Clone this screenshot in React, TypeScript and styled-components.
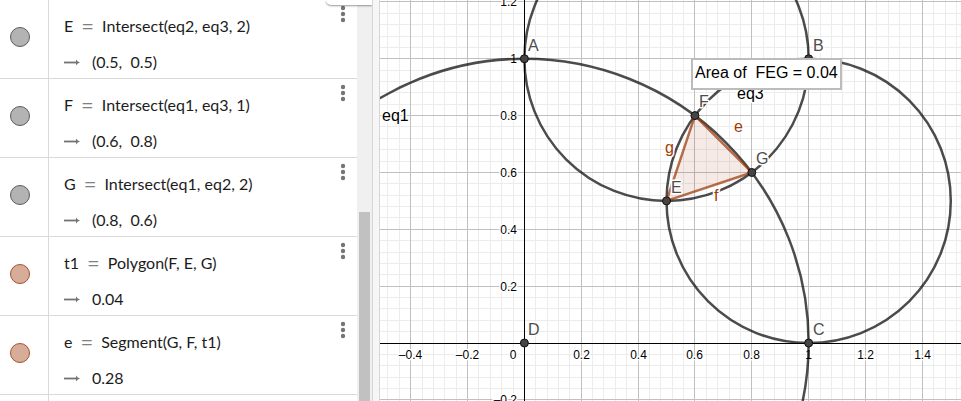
import React from "react";
import styled, { createGlobalStyle } from "styled-components";

const GlobalStyle = createGlobalStyle`
  * { box-sizing: border-box; }
  body { margin: 0; background: #fff; overflow: hidden; }
`;

const Shell = styled.main`
  display: flex;
  height: 100vh;
  min-height: 300px;
  overflow: hidden;
  background: #fff;
`;

const AlgebraView = styled.section`
  position: relative;
  flex: 0 0 372px;
  display: flex;
  overflow: hidden;
`;

const RowList = styled.ul`
  flex: 1;
  display: flex;
  flex-direction: column;
  margin: 0;
  padding: 0;
  list-style: none;
  overflow: hidden;
`;

const Row = styled.li`
  flex: 0 0 79px;
  min-height: 0;
  display: flex;
  border-bottom: 1px solid #dadada;
`;

const EmptyRow = styled.li`
  flex: 1;
  min-height: 0;
  display: flex;
`;

const MarbleCell = styled.div`
  flex: 0 0 49px;
  padding: 27px 0 0 10px;
  border-right: 1px solid #dadada;
`;

const Marble = styled.button<{ $tone: "gray" | "brown" }>`
  display: block;
  width: 20px;
  height: 20px;
  padding: 0;
  border-radius: 50%;
  border: 1px solid ${(p) => (p.$tone === "gray" ? "#5c5c5c" : "#a9502a")};
  background: ${(p) => (p.$tone === "gray" ? "#b3b3b3" : "#d6ad99")};
`;

const Content = styled.div`
  flex: 1;
  padding: 8px 0 0 15px;
  font-family: Lato, sans-serif;
  font-size: 16px;
  line-height: 36px;
  color: #1c1c1c;
  white-space: pre;
`;

const Definition = styled.div`
  display: flex;
  gap: 8px;
`;

const Equals = styled.span`
  font-size: 22px;
  color: #808080;
`;

const Output = styled.div`
  display: flex;
  align-items: center;
  gap: 12px;
`;

const MenuButton = styled.button`
  align-self: flex-start;
  flex: 0 0 29px;
  height: 28px;
  padding: 0;
  border: 0;
  background: none;
`;

const ScrollTrack = styled.div`
  flex: 0 0 15px;
  display: flex;
  flex-direction: column;
  justify-content: flex-end;
  padding: 0 2px;
  background: #f0f0f0;
`;

const ScrollThumb = styled.div`
  height: 189px;
  background: #c1c1c1;
`;

const CornerPanel = styled.div`
  position: absolute;
  top: 0;
  right: 0;
  width: 46px;
  height: 5px;
  border-bottom-left-radius: 6px;
  background: #fff;
  box-shadow: 0 1px 2px rgba(0, 0, 0, 0.4);
`;

const Splitter = styled.div`
  flex: 0 0 8px;
  border: solid #d6d6d6;
  border-width: 0 1px;
  background: #f6f6f6;
`;

const GraphicsView = styled.section`
  position: relative;
  flex: 1;
  min-width: 0;
  overflow: hidden;
`;

const Canvas = styled.svg`
  display: block;
  width: 100%;
  height: 100%;
  font-family: "Liberation Sans", Arial, sans-serif;
`;

const Tick = styled.text`
  font-size: 12px;
  fill: #000;
  stroke: #fff;
  stroke-width: 3px;
  stroke-linejoin: round;
  paint-order: stroke;
`;

const Label = styled.text<{ $color: string }>`
  font-size: 16px;
  fill: ${(p) => p.$color};
  stroke: #fff;
  stroke-width: 3px;
  stroke-linejoin: round;
  paint-order: stroke;
`;

const AreaText = styled.div`
  position: absolute;
  left: 311px;
  top: 58px;
  padding: 3px 2px 5px;
  border: 2px solid #bcbcbc;
  background: #fff;
  font-family: "Liberation Sans", Arial, sans-serif;
  font-size: 16px;
  line-height: 20px;
  color: #000;
  white-space: pre;
`;

type Item = { name: string; command: string; value: string; tone: "gray" | "brown" };

const items: Item[] = [
  { name: "E", command: "Intersect(eq2, eq3, 2)", value: "(0.5,  0.5)", tone: "gray" },
  { name: "F", command: "Intersect(eq1, eq3, 1)", value: "(0.6,  0.8)", tone: "gray" },
  { name: "G", command: "Intersect(eq1, eq2, 2)", value: "(0.8,  0.6)", tone: "gray" },
  { name: "t1", command: "Polygon(F, E, G)", value: "0.04", tone: "brown" },
  { name: "e", command: "Segment(G, F, t1)", value: "0.28", tone: "brown" },
];

const UNIT = 284.25;
const ORIGIN = { x: 144.4, y: 343.02 };
const px = (x: number) => ORIGIN.x + x * UNIT;
const py = (y: number) => ORIGIN.y - y * UNIT;
const crisp = (v: number) => Math.floor(v) + 0.5;

const steps = Array.from({ length: 240 }, (_, i) => i - 60);
const minor = steps.filter((k) => k % 5 !== 0);
const major = steps.filter((k) => k % 5 === 0 && k !== 0);
const xTicks = major.filter((k) => k >= -10 && k <= 35);
const yTicks = major.filter((k) => k >= -5 && k <= 30);
const tickText = (k: number) => {
  const v = k * 0.04;
  return (v < 0 ? "–" : "") + String(Math.round(Math.abs(v) * 10) / 10);
};

const gridPath = (list: number[]) =>
  list
    .map((k) => `M${crisp(px(k * 0.04))} 0V4000M0 ${crisp(py(k * 0.04))}H4000`)
    .join("");

const points = [
  { name: "A", x: 0, y: 1, lx: 148, ly: 51 },
  { name: "B", x: 1, y: 1, lx: 433, ly: 51 },
  { name: "C", x: 1, y: 0, lx: 433, ly: 335 },
  { name: "D", x: 0, y: 0, lx: 148, ly: 335 },
  { name: "E", x: 0.5, y: 0.5, lx: 291, ly: 193 },
  { name: "F", x: 0.6, y: 0.8, lx: 319, ly: 107 },
  { name: "G", x: 0.8, y: 0.6, lx: 376, ly: 164 },
];

const captions = [
  { text: "eq1", x: 2, y: 121, color: "#000" },
  { text: "eq3", x: 357, y: 99, color: "#000" },
  { text: "e", x: 354, y: 132, color: "#a03a08" },
  { text: "g", x: 285, y: 153, color: "#a03a08" },
  { text: "f", x: 334, y: 201, color: "#a03a08" },
];

const triangle = [[0.6, 0.8], [0.5, 0.5], [0.8, 0.6]]
  .map(([x, y]) => `${px(x)},${py(y)}`)
  .join(" ");

function AlgebraRow({ item }: { item: Item }) {
  return (
    <Row>
      <MarbleCell>
        <Marble $tone={item.tone} aria-label={`Show or hide ${item.name}`} />
      </MarbleCell>
      <Content>
        <Definition>
          <span>{item.name}</span>
          <Equals>=</Equals>
          <span>{item.command}</span>
        </Definition>
        <Output>
          <svg width="16" height="8" viewBox="0 0 16 8" aria-hidden="true">
            <path d="M0 4.5H13" stroke="#737373" strokeWidth="1.8" />
            <path d="M12 1.5Q13.5 3.8 16 4.5Q13.5 5.2 12 7.5Z" fill="#737373" />
          </svg>
          <span>{item.value}</span>
        </Output>
      </Content>
      <MenuButton aria-label={`More options for ${item.name}`}>
        <svg width="29" height="28" fill="#757575" aria-hidden="true">
          <circle cx="15" cy="8" r="2.2" />
          <circle cx="15" cy="14" r="2.2" />
          <circle cx="15" cy="20" r="2.2" />
        </svg>
      </MenuButton>
    </Row>
  );
}

export default function App() {
  return (
    <>
      <GlobalStyle />
      <Shell>
        <AlgebraView aria-label="Algebra view">
          <RowList>
            {items.map((item) => (
              <AlgebraRow key={item.name} item={item} />
            ))}
            <EmptyRow>
              <MarbleCell />
            </EmptyRow>
          </RowList>
          <ScrollTrack>
            <ScrollThumb />
          </ScrollTrack>
          <CornerPanel />
        </AlgebraView>
        <Splitter />
        <GraphicsView aria-label="Graphics view">
          <Canvas>
            <path d={gridPath(minor)} stroke="#ececec" fill="none" />
            <path d={gridPath(major)} stroke="#c0c0c0" fill="none" />
            <path
              d={`M${crisp(px(0))} 0V4000M0 ${crisp(py(0))}H4000`}
              stroke="#000"
              fill="none"
            />
            {xTicks.map((k) => (
              <Tick key={k} x={crisp(px(k * 0.04))} y={359} textAnchor="middle">
                {tickText(k)}
              </Tick>
            ))}
            {yTicks.map((k) => (
              <Tick key={k} x={137} y={crisp(py(k * 0.04)) + 4} textAnchor="end">
                {tickText(k)}
              </Tick>
            ))}
            <Tick x={133} y={359} textAnchor="middle">0</Tick>
            <polygon points={triangle} fill="#993300" fillOpacity="0.1" />
            <g fill="none" stroke="#000" strokeOpacity="0.7" strokeWidth="2.5">
              <circle cx={px(0)} cy={py(0)} r={UNIT} />
              <circle cx={px(0.5)} cy={py(1)} r={UNIT / 2} />
              <circle cx={px(1)} cy={py(0.5)} r={UNIT / 2} />
            </g>
            <polygon
              points={triangle}
              fill="none"
              stroke="#993300"
              strokeOpacity="0.7"
              strokeWidth="2.5"
              strokeLinejoin="round"
            />
            {captions.map((c) => (
              <Label key={c.text} x={c.x} y={c.y} $color={c.color}>{c.text}</Label>
            ))}
            {points.map((p) => (
              <Label key={p.name} x={p.lx} y={p.ly} $color="#4d4d4d">{p.name}</Label>
            ))}
            {points.map((p) => (
              <circle
                key={p.name}
                cx={px(p.x)}
                cy={py(p.y)}
                r="4"
                fill="#444"
                stroke="#111"
              />
            ))}
          </Canvas>
          <AreaText>{"Area of  FEG = 0.04"}</AreaText>
        </GraphicsView>
      </Shell>
    </>
  );
}
